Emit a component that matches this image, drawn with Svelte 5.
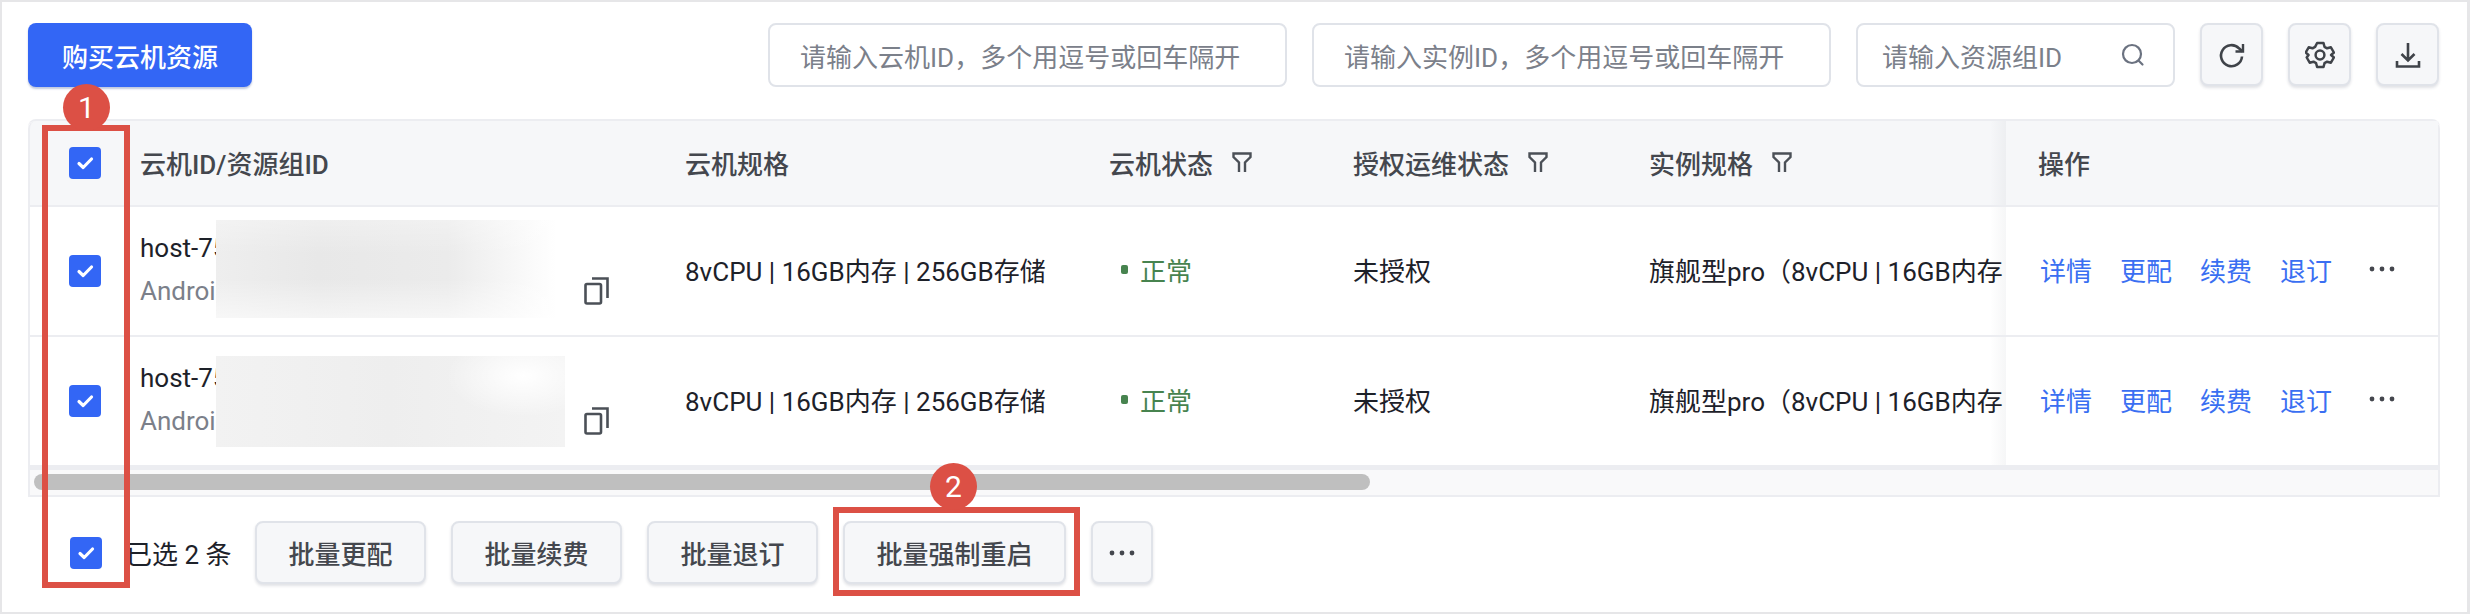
<script>
  const rows = [
    { blur: 'blur-a' },
    { blur: 'blur-b' }
  ];
  const columns = [
    { label: '云机ID/资源组ID' },
    { label: '云机规格' },
    { label: '云机状态', filter: true },
    { label: '授权运维状态', filter: true },
    { label: '实例规格', filter: true }
  ];
  const batch = ['批量更配', '批量续费', '批量退订', '批量强制重启'];
  const actions = ['详情', '更配', '续费', '退订'];
</script>

{#snippet check()}
  <span class="check">
    <svg width="32" height="32" viewBox="0 0 32 32"><path d="M10 16.500l4.200 4L22.500 12" fill="none" stroke="#fff" stroke-width="3.200" stroke-linecap="round" stroke-linejoin="round" /></svg>
  </span>
{/snippet}

{#snippet dots()}
  <svg class="dots" width="26" height="6" viewBox="0 0 26 6"><circle cx="3" cy="3" r="2.400" /><circle cx="13" cy="3" r="2.400" /><circle cx="23" cy="3" r="2.400" /></svg>
{/snippet}

<div class="page">
  <div class="toolbar">
    <button class="primary">购买云机资源</button>
    <div class="filters">
      <div class="input wide">请输入云机ID，多个用逗号或回车隔开</div>
      <div class="input wide">请输入实例ID，多个用逗号或回车隔开</div>
      <div class="input narrow">
        请输入资源组ID
        <svg width="28" height="28" viewBox="0 0 28 28" fill="none" stroke="#6b7280" stroke-width="2.200" stroke-linecap="round"><circle cx="13" cy="13" r="9" /><path d="M20 20l3.500 3.500" /></svg>
      </div>
      <div class="tools">
        <button class="tool" aria-label="刷新">
          <svg width="28" height="28" viewBox="0 0 28 28" fill="none" stroke="#3f4349" stroke-width="2.600"><path d="M24 15.500a10.500 10.500 0 1 1-3-8.200L24.500 10.500" /><path d="M25 3v7.500h-7.500" stroke-width="2.400" /></svg>
        </button>
        <button class="tool" aria-label="设置">
          <svg width="30" height="30" viewBox="0 0 30 30" fill="none" stroke="#3f4349" stroke-width="2.500" stroke-linejoin="round"><path d="M11.800 3h6.400l1 3.800 2.600 1.500 3.800-1 3 5.200-2.800 2.500 2.800 2.500-3 5.200-3.800-1-2.600 1.500-1 3.800h-6.400l-1-3.800-2.600-1.500-3.800 1-3-5.200L3.200 15 .4 12.500l3-5.200 3.800 1 2.600-1.500z" transform="translate(.3 0)" /><circle cx="15" cy="15" r="4.400" /></svg>
        </button>
        <button class="tool" aria-label="下载">
          <svg width="28" height="28" viewBox="0 0 28 28" fill="none" stroke="#3f4349" stroke-width="2.600"><path d="M14 2v17M7.500 13l6.500 6.500 6.500-6.500" /><path d="M3 20v5.500h22V20" /></svg>
        </button>
      </div>
    </div>
  </div>

  <div class="table">
    <div class="row head">
      <div class="cell box">{@render check()}</div>
      {#each columns as col}
        <div class="cell">
          {col.label}
          {#if col.filter}
            <svg class="filter" width="20" height="20" viewBox="0 0 20 20" fill="none" stroke="#4b5057" stroke-width="2.400"><path d="M7 20v-9.500L1.500 5V1.500h17V5L13 10.500V20" /></svg>
          {/if}
        </div>
      {/each}
      <div class="cell ops">操作</div>
    </div>

    {#each rows as row}
      <div class="row body">
        <div class="cell box">{@render check()}</div>
        <div class="cell name">
          <div class="ids">
            <div class="host">host-75</div>
            <div class="group">Android</div>
            <div class="blur {row.blur}"></div>
          </div>
          <svg class="copy" width="25" height="28" viewBox="0 0 25 28" fill="none" stroke="#4b5057" stroke-width="2.600"><rect x="1.500" y="7" width="15.500" height="19.500" rx="1.500" /><path d="M8 1.500h15.500V21" /></svg>
        </div>
        <div class="cell">8vCPU | 16GB内存 | 256GB存储</div>
        <div class="cell status"><i></i>正常</div>
        <div class="cell">未授权</div>
        <div class="cell">旗舰型pro（8vCPU | 16GB内存</div>
        <div class="cell ops links">
          {#each actions as action}
            <span>{action}</span>
          {/each}
          {@render dots()}
        </div>
      </div>
    {/each}

    <div class="track"><div class="thumb"></div></div>
  </div>

  <div class="footer">
    {@render check()}
    <span class="count">已选 2 条</span>
    {#each batch as label}
      <button class="ghost">{label}</button>
    {/each}
    <button class="ghost more" aria-label="更多">{@render dots()}</button>
  </div>

  <!-- callouts drawn over the screenshot -->
  <div class="mark mark-1"></div>
  <div class="mark mark-2"></div>
  <div class="badge badge-1">1</div>
  <div class="badge badge-2">2</div>
</div>

<style>
  :global(body) {
    margin: 0;
    background: #fff;
  }

  .page {
    position: relative;
    box-sizing: border-box;
    width: 2470px;
    height: 614px;
    padding: 21px 28px 0 26px;
    border: 2px solid #e6e6e8;
    border-right-width: 3px;
    font-family: Roboto, "Noto Sans CJK SC", sans-serif;
    font-size: 26px;
    color: #1d2129;
    overflow: hidden;
  }

  button {
    font: inherit;
    cursor: pointer;
    box-sizing: border-box;
  }

  .toolbar {
    display: flex;
    justify-content: space-between;
    height: 64px;
  }

  .primary {
    width: 224px;
    height: 64px;
    border: 0;
    border-radius: 8px;
    background: #3366f5;
    color: #fff;
    font-weight: 500;
    box-shadow: 0 2px 2px rgba(30, 60, 140, 0.28);
  }

  .filters {
    display: flex;
    gap: 25px;
  }

  .input {
    box-sizing: border-box;
    height: 64px;
    border: 2px solid #e0e3e9;
    border-radius: 8px;
    padding: 0 30px;
    display: flex;
    align-items: center;
    justify-content: space-between;
    color: #7b808a;
    background: #fff;
  }

  .wide {
    width: 519px;
  }

  .narrow {
    width: 319px;
    padding: 0 26px 0 24px;
  }

  .tools {
    display: flex;
    gap: 25px;
  }

  .tool {
    width: 63px;
    height: 63px;
    border: 2px solid #e0e3e9;
    border-radius: 8px;
    background: #f6f7f9;
    padding: 0;
    display: flex;
    align-items: center;
    justify-content: center;
    box-shadow: 0 2px 3px rgba(40, 50, 80, 0.14);
  }

  .table {
    margin-top: 32px;
    width: 2412px;
    border-top: 2px solid #ecedf1;
    border-radius: 8px 8px 0 0;
    box-sizing: border-box;
  }

  .row {
    display: grid;
    grid-template-columns: 110px 545px 424px 244px 296px 357px 432px;
    box-sizing: border-box;
    border-left: 2px solid #ecedf1;
    border-right: 2px solid #ecedf1;
  }

  .head {
    height: 86px;
    background: #f6f7f9;
    color: #44474e;
    font-weight: 500;
    border-bottom: 2px solid #ecedf1;
    border-radius: 8px 8px 0 0;
  }

  .body {
    height: 130px;
    border-bottom: 2px solid #ecedf1;
  }

  .cell {
    display: flex;
    align-items: center;
    min-width: 0;
    white-space: nowrap;
    box-sizing: border-box;
  }

  .head .cell {
    padding-bottom: 2px;
  }

  .body .cell {
    padding-bottom: 4px;
  }

  .row .box {
    padding-left: 39px;
    padding-bottom: 0;
  }

  .check {
    flex: none;
    width: 32px;
    height: 32px;
    border-radius: 4px;
    background: #3366f5;
    display: block;
  }

  .check svg {
    display: block;
  }

  .filter {
    margin-left: 19px;
  }

  .ops {
    padding-left: 32px;
    background: inherit;
    position: relative;
  }

  /* soft edge of the pinned column */
  .ops::before {
    content: "";
    position: absolute;
    left: -16px;
    top: 0;
    bottom: 0;
    width: 16px;
    background: linear-gradient(to right, rgba(40, 50, 70, 0), rgba(40, 50, 70, 0.045));
  }

  .body .ops {
    background: #fff;
  }

  .name {
    position: relative;
    align-items: stretch;
  }

  .ids {
    display: flex;
    flex-direction: column;
    justify-content: center;
    gap: 9px;
    line-height: 34px;
  }

  .host {
    color: #1d2129;
  }

  .group {
    color: #7b808a;
  }

  .blur {
    position: absolute;
    left: 76px;
  }

  .blur-a {
    top: 13px;
    width: 340px;
    height: 98px;
    background:
      linear-gradient(to bottom, rgba(255, 255, 255, 0.3), rgba(255, 255, 255, 0) 35%, rgba(255, 255, 255, 0) 60%, rgba(255, 255, 255, 0.55)),
      linear-gradient(to right, #eeeeee 0%, #e8e8e8 30%, #ebebeb 68%, #ffffff 100%);
  }

  .blur-b {
    top: 19px;
    width: 349px;
    height: 91px;
    background:
      radial-gradient(ellipse 22% 45% at 88% 22%, #ffffff 0%, rgba(255, 255, 255, 0) 100%),
      linear-gradient(to right, #f2f2f2, #eeeeee 50%, #f3f3f3);
  }

  .copy {
    position: absolute;
    left: 444px;
    top: 70px;
  }

  .status {
    color: #47834f;
    padding-left: 12px;
  }

  .status i {
    width: 7px;
    height: 9px;
    border-radius: 2px;
    background: #47834f;
    margin-right: 12px;
  }

  .links {
    color: #3a6ff2;
    gap: 28px;
    padding-left: 34px;
  }

  .dots {
    fill: #44474e;
    margin-left: 9px;
  }

  .track {
    box-sizing: border-box;
    height: 31px;
    margin-top: -1px;
    background: #f9f9fa;
    border: 2px solid #ecedf1;
    border-top-width: 4px;
    padding: 4px 4px;
  }

  .thumb {
    width: 1336px;
    height: 16px;
    border-radius: 8px;
    background: #bfbfbf;
  }

  .footer {
    display: flex;
    align-items: center;
    height: 63px;
    margin-top: 24px;
    padding-left: 42px;
  }

  .count {
    margin-left: 24px;
    margin-right: 25px;
    width: 104px;
    color: #1d2129;
    white-space: nowrap;
  }

  .ghost {
    height: 63px;
    width: 171px;
    margin-right: 25px;
    border: 2px solid #e0e3e9;
    border-radius: 8px;
    background: #f6f7f9;
    color: #44474e;
    font-weight: 500;
    padding: 0;
    box-shadow: 0 2px 3px rgba(40, 50, 80, 0.14);
  }

  .ghost:nth-of-type(4) {
    width: 223px;
  }

  .more {
    width: 62px;
    display: flex;
    align-items: center;
    justify-content: center;
  }

  .more .dots {
    margin-left: 0;
  }

  .mark {
    position: absolute;
    box-sizing: border-box;
    border: 6px solid #dc5045;
    pointer-events: none;
  }

  .mark-1 {
    left: 40px;
    top: 123px;
    width: 88px;
    height: 463px;
  }

  .mark-2 {
    left: 831px;
    top: 505px;
    width: 247px;
    height: 89px;
  }

  .badge {
    position: absolute;
    width: 47px;
    height: 47px;
    border-radius: 50%;
    background: #dc5045;
    color: #fff;
    font-size: 30px;
    line-height: 47px;
    text-align: center;
  }

  .badge-1 {
    left: 61px;
    top: 82px;
  }

  .badge-2 {
    left: 928px;
    top: 461px;
  }
</style>
